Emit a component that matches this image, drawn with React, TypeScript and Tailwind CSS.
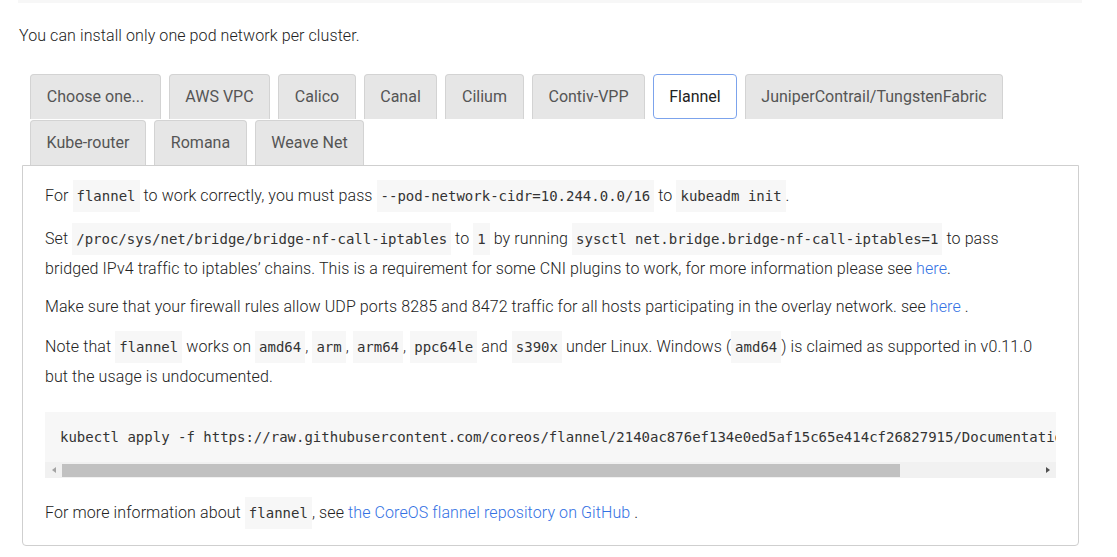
import React from 'react';

type Tab = { label: string; width: string; active?: boolean };

const tabs: Tab[] = [
  { label: 'Choose one...', width: 'w-[131px]' },
  { label: 'AWS VPC', width: 'w-[101px]' },
  { label: 'Calico', width: 'w-[78px]' },
  { label: 'Canal', width: 'w-[73px]' },
  { label: 'Cilium', width: 'w-[79px]' },
  { label: 'Contiv-VPP', width: 'w-[113px]' },
  { label: 'Flannel', width: 'w-[84px]', active: true },
  { label: 'JuniperContrail/TungstenFabric', width: 'w-[258px]' },
  { label: 'Kube-router', width: 'w-[116px]' },
  { label: 'Romana', width: 'w-[93px]' },
  { label: 'Weave Net', width: 'w-[109px]' },
];

const manifest =
  'kubectl apply -f https://raw.githubusercontent.com/coreos/flannel/2140ac876ef134e0ed5af15c65e414cf26827915/Documentation/kube-flannel.yml';

function Code({ children }: { children: React.ReactNode }) {
  return (
    <code className="bg-[#f7f7f7] px-[4px] py-[8px] font-['DejaVu_Sans_Mono',monospace] text-[14px] font-normal tracking-normal text-[#333]">
      {children}
    </code>
  );
}

function Link({ children }: { children: React.ReactNode }) {
  return <a className="text-[#3371e3]">{children}</a>;
}

function TabButton({ tab }: { tab: Tab }) {
  if (tab.active) {
    return (
      <div
        className={`${tab.width} flex h-[45px] items-center justify-center rounded-[4px] border border-[#7ca3ec] bg-white text-[16px] text-[#222]`}
      >
        {tab.label}
      </div>
    );
  }
  return (
    <div
      className={`${tab.width} flex h-[45px] items-center justify-center rounded-t-[4px] border border-b-0 border-[#d3d3d3] bg-[#e6e6e6] text-[16px] text-[#555]`}
    >
      {tab.label}
    </div>
  );
}

function FakeScrollbar() {
  return (
    <div className="flex h-[16px] items-center bg-[#f1f1f1]">
      <div className="flex w-[17px] justify-center">
        <div className="h-0 w-0 border-y-[3px] border-r-[4px] border-y-transparent border-r-[#a3a3a3]" />
      </div>
      <div className="h-[13px] w-[838px] bg-[#c1c1c1]" />
      <div className="flex-1" />
      <div className="flex w-[17px] justify-center">
        <div className="h-0 w-0 border-y-[3px] border-l-[4px] border-y-transparent border-l-[#505050]" />
      </div>
    </div>
  );
}

export default function App() {
  return (
    <div className="min-h-screen bg-white font-['Roboto',sans-serif] text-[#222]">
      <div className="px-[18px]">
        <div className="h-[3px] w-[1064px] bg-[#f7f7f7]" />

        <p className="ml-px mt-[18px] text-[16px] font-light leading-[30px] tracking-[0.09px]">
          You can install only one pod network per cluster.
        </p>

        <div className="ml-[12px] mt-[23px] flex w-[1048px] flex-wrap gap-x-[8px] gap-y-px">
          {tabs.map((tab) => (
            <TabButton key={tab.label} tab={tab} />
          ))}
        </div>

        <div className="ml-[4px] w-[1057px] rounded-b-[4px] border border-[#cfcfcf] px-[22px] pb-[17px] pt-[15px] text-[16px] font-light leading-[30px] tracking-[0.1px]">
          <p className="mb-[13px]">
            For <Code>flannel</Code> to work correctly, you must pass{' '}
            <Code>--pod-network-cidr=10.244.0.0/16</Code> to <Code>kubeadm init</Code>.
          </p>
          <p className="mb-[8px]">
            Set <Code>/proc/sys/net/bridge/bridge-nf-call-iptables</Code> to <Code>1</Code> by running{' '}
            <Code>sysctl net.bridge.bridge-nf-call-iptables=1</Code> to pass bridged IPv4 traffic to
            iptables’ chains. This is a requirement for some CNI plugins to work, for more information
            please see <Link>here</Link>.
          </p>
          <p className="mb-[10px]">
            Make sure that your firewall rules allow UDP ports 8285 and 8472 traffic for all hosts
            participating in the overlay network. see <Link>here</Link> .
          </p>
          <p>
            Note that <Code>flannel</Code> works on <Code>amd64</Code>, <Code>arm</Code>,{' '}
            <Code>arm64</Code>, <Code>ppc64le</Code> and <Code>s390x</Code> under Linux. Windows (
            <Code>amd64</Code>) is claimed as supported in v0.11.0 but the usage is undocumented.
          </p>

          <div className="mt-[20px] bg-[#f7f7f7]">
            <pre className="overflow-hidden whitespace-pre px-[15px] py-[15px] font-['DejaVu_Sans_Mono',monospace] text-[14px] font-normal leading-[20px] tracking-normal text-[#333]">
              {manifest}
            </pre>
            <FakeScrollbar />
          </div>

          <p className="mt-[20px]">
            For more information about <Code>flannel</Code>, see{' '}
            <Link>the CoreOS flannel repository on GitHub</Link> .
          </p>
        </div>
      </div>
    </div>
  );
}
